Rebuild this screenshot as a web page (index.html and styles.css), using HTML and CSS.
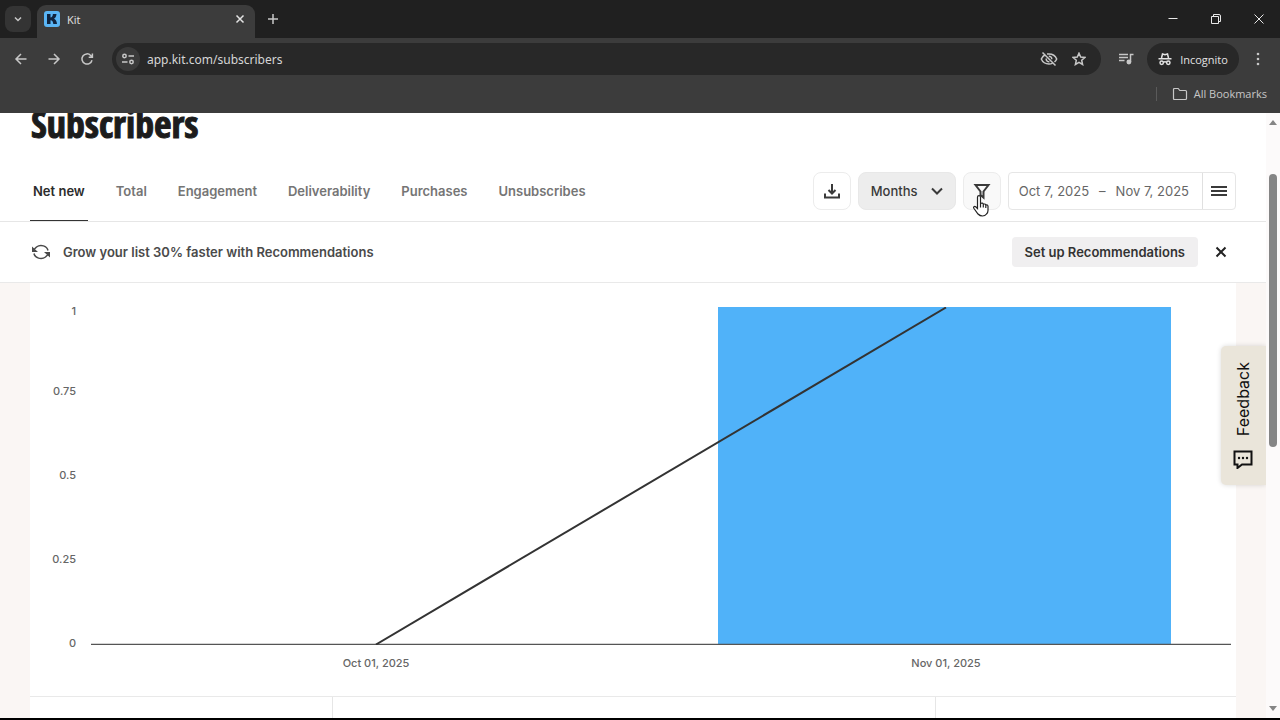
FILE: index.html
```
<!DOCTYPE html>
<html lang="en">
<head>
  <meta charset="UTF-8">
  <meta name="viewport" content="width=device-width, initial-scale=1.0">
  <title>Kit</title>
  <link rel="stylesheet" href="styles.css">
</head>
<body>
  <!-- Browser window -->
  <header class="browser">
    <div class="tab-strip">
      <button class="tab-search" aria-label="Search tabs">
        <svg width="10" height="10" viewBox="0 0 10 10"><path d="M2 3.5 5 6.5 8 3.5"/></svg>
      </button>
      <div class="browser-tab">
        <svg class="favicon" width="16" height="16" viewBox="0 0 16 16"><rect width="16" height="16" rx="3" fill="#5ab5f5"/><path d="M3 3h3.500v3.500C8 6.500 8.700 5 8.900 3h3.600c-.2 2.200-1 3.900-2.500 4.800 1.700.7 2.700 2.500 3 5.200H9.300C9.100 10.700 8.300 9.300 6.500 9.300V13H3z" fill="#10243f"/></svg>
        <span>Kit</span>
        <button class="tab-close" aria-label="Close tab">
          <svg width="10" height="10" viewBox="0 0 10 10"><path d="M1.500 1.500l7 7M8.500 1.500l-7 7"/></svg>
        </button>
      </div>
      <button class="new-tab" aria-label="New tab">
        <svg width="12" height="12" viewBox="0 0 12 12"><path d="M6 1v10M1 6h10"/></svg>
      </button>
      <div class="window-buttons">
        <button aria-label="Minimize"><svg width="12" height="12" viewBox="0 0 12 12"><path d="M1.500 5.500h9"/></svg></button>
        <button aria-label="Restore"><svg width="12" height="12" viewBox="0 0 12 12"><path d="M1.500 3.500h7v7h-7zM3.500 3.500v-2h5.500a1.500 1.500 0 0 1 1.500 1.500v5.500h-2"/></svg></button>
        <button aria-label="Close"><svg width="12" height="12" viewBox="0 0 12 12"><path d="M1.500 1.500l9 9M10.500 1.500l-9 9"/></svg></button>
      </div>
    </div>

    <div class="toolbar">
      <button aria-label="Back"><svg width="14" height="14" viewBox="0 0 14 14"><path d="M12.500 7H2M7 2 2 7l5 5"/></svg></button>
      <button aria-label="Forward"><svg width="14" height="14" viewBox="0 0 14 14"><path d="M1.500 7H12M7 2l5 5-5 5"/></svg></button>
      <button aria-label="Reload"><svg width="14" height="14" viewBox="0 0 14 14"><path d="M12 8.200A5.100 5.100 0 1 1 10.700 3.400L12.200 5M12.400 1.500V5.200H8.700"/></svg></button>
      <div class="address-bar">
        <button class="site-info" aria-label="Site information">
          <svg width="14" height="14" viewBox="0 0 14 14"><circle cx="3.500" cy="4" r="1.700"/><path d="M7.500 4H13M1 10h5.500"/><circle cx="10.500" cy="10" r="1.700"/></svg>
        </button>
        <input type="text" value="app.kit.com/subscribers" aria-label="Address">
        <button aria-label="Third-party cookies blocked">
          <svg width="18" height="16" viewBox="0 0 18 16"><path d="M5.500 3.500C3.700 4.400 2.200 6 1.300 8c1.300 3.100 4.300 5 7.700 5 1.200 0 2.300-.2 3.300-.7M7 3.100C7.600 3 8.300 3 9 3c3.400 0 6.400 1.900 7.700 5-.5 1.200-1.300 2.200-2.200 3M2.500 1.500l13 13M6.200 7.500a2.900 2.900 0 0 0 3.200 3.300M8.800 5.200A2.900 2.900 0 0 1 11.800 8.300"/></svg>
        </button>
        <button aria-label="Bookmark this tab">
          <svg width="14" height="14" viewBox="0 0 14 14"><path d="M7 1.200l1.700 3.900 4.200.4-3.200 2.800.9 4.200L7 10.300l-3.600 2.200.9-4.200L1.100 5.500l4.200-.4z"/></svg>
        </button>
      </div>
      <button class="media" aria-label="Control your media">
        <svg width="16" height="14" viewBox="0 0 16 14"><path d="M1 2.500h9M1 5.500h9M1 8.500h5.500M12.500 10V2.500H15.500"/><circle cx="10.900" cy="10" r="1.700" fill="#c7c7c7"/></svg>
      </button>
      <button class="incognito">
        <svg width="14" height="14" viewBox="0 0 14 14"><path d="M3.500 6l1-4 2.500.7L9.500 2l1 4M.5 6.700h13M5.500 10.200q1.500-1 3 0"/><circle cx="3.700" cy="10.700" r="1.700"/><circle cx="10.300" cy="10.700" r="1.700"/></svg>
        Incognito
      </button>
      <button class="more" aria-label="Customize and control">
        <svg width="4" height="14" viewBox="0 0 4 14"><g class="dots"><circle cx="2" cy="2" r="1.300"/><circle cx="2" cy="7" r="1.300"/><circle cx="2" cy="12" r="1.300"/></g></svg>
      </button>
    </div>

    <div class="bookmarks-bar">
      <button>
        <svg width="16" height="14" viewBox="0 0 16 14"><path d="M1.500 11.500V2.500q0-1 1-1h3.700l1.600 2h5.700q1 0 1 1v7q0 1-1 1h-11q-1 0-1-1z"/></svg>
        All Bookmarks
      </button>
    </div>
  </header>

  <div class="viewport">
    <main class="page">
      <h1>Subscribers</h1>

      <div class="page-nav">
        <nav class="tabs">
          <a class="active" href="#net-new">Net new</a>
          <a href="#total">Total</a>
          <a href="#engagement">Engagement</a>
          <a href="#deliverability">Deliverability</a>
          <a href="#purchases">Purchases</a>
          <a href="#unsubscribes">Unsubscribes</a>
        </nav>
        <div class="controls">
          <button class="icon-button" aria-label="Download">
            <svg width="18" height="18" viewBox="0 0 18 18"><path d="M9 2v9M5.500 8 9 11.500 12.500 8M2 11.500v4h14v-4"/></svg>
          </button>
          <div class="select">
            <select aria-label="Interval">
              <option>Months</option>
              <option>Weeks</option>
              <option>Days</option>
            </select>
            <svg width="14" height="14" viewBox="0 0 14 14"><path d="M2 4.500 7 9.500 12 4.500"/></svg>
          </div>
          <div class="filter">
            <button class="icon-button hovered" aria-label="Filter">
              <svg width="18" height="18" viewBox="0 0 18 18"><path d="M2.500 3h13L10.500 9.500v6L7.500 13V9.500z"/></svg>
            </button>
            <svg class="cursor" width="18" height="24" viewBox="0 0 18 24"><path d="M5.500 14.500V3.200a1.500 1.500 0 0 1 3 0V9.500q2.300-1 2.800.7 2-.7 2.500.8 2-.5 2.200 1.200v4.300q0 2-1.500 3.500-1.500 2-4 2T6 20L2 14.500q-1-1.500.3-2 1-.4 3.200 2zM8.500 9.500v4M11.300 10.500v3M13.800 11.200V14"/></svg>
          </div>
          <div class="date-range">
            <button class="dates"><span>Oct 7, 2025</span><span>–</span><span>Nov 7, 2025</span></button>
            <button class="presets" aria-label="Date presets">
              <svg width="18" height="14" viewBox="0 0 18 14"><path d="M1 3h16M1 7h16M1 11h16"/></svg>
            </button>
          </div>
        </div>
      </div>

      <div class="banner">
        <svg width="20" height="18" viewBox="0 0 20 18"><path d="M17 7.500A7 6 0 0 0 5.500 4L3 6.500M3 10.500A7 6 0 0 0 14.500 14l2.500-2.500"/><path class="heads" d="M1 3.500v5.500h6zM19 14.500V9h-6z"/></svg>
        <p>Grow your list 30% faster with Recommendations</p>
        <button class="setup">Set up Recommendations</button>
        <button class="dismiss" aria-label="Dismiss">
          <svg width="12" height="12" viewBox="0 0 12 12"><path d="M1.500 1.500l9 9M10.500 1.500l-9 9"/></svg>
        </button>
      </div>

      <section class="report">
        <div class="chart">
          <div class="y-axis">
            <span>1</span>
            <span>0.75</span>
            <span>0.5</span>
            <span>0.25</span>
            <span>0</span>
          </div>
          <svg class="plot" viewBox="0 0 1140 338" preserveAspectRatio="none" role="img" aria-label="Net new subscribers by month">
            <rect x="627" y="0" width="453" height="337" fill="#50b2f9"/>
            <path d="M0 337.500H1140"/>
            <path class="trend" d="M285 337.500 855 .5"/>
          </svg>
          <div class="x-axis">
            <span>Oct 01, 2025</span>
            <span>Nov 01, 2025</span>
          </div>
        </div>
        <div class="totals"><div></div><div></div><div></div></div>
      </section>

      <button class="feedback">
        <svg width="20" height="20" viewBox="0 0 20 20"><path d="M1.500 2.500h17v13H9L4.500 19v-3.500h-3z"/><g class="dots"><circle cx="6" cy="9" r="1.200"/><circle cx="10" cy="9" r="1.200"/><circle cx="14" cy="9" r="1.200"/></g></svg>
        <span>Feedback</span>
      </button>
    </main>

    <div class="scrollbar">
      <svg width="8" height="5" viewBox="0 0 8 5"><path d="M4 0l4 5H0z"/></svg>
      <div class="track"><div class="thumb"></div></div>
      <svg width="8" height="5" viewBox="0 0 8 5"><path d="M0 0h8L4 5z"/></svg>
    </div>
  </div>
</body>
</html>
```

FILE: styles.css
```
* {
  box-sizing: border-box;
}

body {
  margin: 0;
  height: 100vh;
  display: flex;
  flex-direction: column;
  overflow: hidden;
  border-bottom: 2px solid #000;
  font-family: Inter, 'Liberation Sans', sans-serif;
  color: #222;
  background: #fff;
}

button,
input,
select {
  margin: 0;
  padding: 0;
  border: none;
  background: none;
  color: inherit;
  font: inherit;
}

button {
  display: flex;
  align-items: center;
  justify-content: center;
  flex-shrink: 0;
}

svg {
  display: block;
  flex-shrink: 0;
  fill: none;
  stroke: currentColor;
  stroke-width: 1.5;
}

.dots {
  fill: currentColor;
  stroke: none;
}

/* Browser window */
.browser {
  flex-shrink: 0;
  height: 113px;
  background: #3c3c3c;
  color: #c7c7c7;
  font-family: 'Open Sans', 'Noto Sans', sans-serif;
  font-size: 11px;
}

.tab-strip {
  display: flex;
  align-items: center;
  height: 38px;
  padding-left: 5px;
  background: #202020;
}

.tab-search {
  width: 26px;
  height: 26px;
  border-radius: 8px;
  background: #343434;
}

.browser-tab {
  display: flex;
  align-items: center;
  gap: 7px;
  width: 218px;
  height: 33px;
  margin: 5px 0 0 6px;
  padding: 0 8px 5px 7px;
  border-radius: 9px 9px 0 0;
  background: #3c3c3c;
  color: #e3e3e3;
}

.favicon {
  stroke: none;
}

.tab-close {
  width: 14px;
  height: 14px;
  margin-left: auto;
}

.new-tab {
  width: 36px;
  height: 28px;
}

.window-buttons {
  display: flex;
  margin-left: auto;
  color: #e8e8e8;
}

.window-buttons button {
  width: 43px;
  height: 38px;
}

.window-buttons svg {
  stroke-width: 1;
}

.toolbar {
  display: flex;
  align-items: center;
  height: 42px;
  padding: 0 3px 0 4px;
}

.toolbar > button {
  width: 33px;
  height: 32px;
}

.address-bar {
  display: flex;
  flex: 1;
  align-items: center;
  height: 32px;
  margin-left: 9px;
  padding: 0 7px 0 4px;
  border-radius: 16px;
  background: #282828;
}

.address-bar button {
  width: 30px;
  height: 26px;
}

.address-bar .site-info {
  width: 24px;
  height: 24px;
  border-radius: 12px;
  background: #3a3a3a;
}

.address-bar input {
  flex: 1;
  min-width: 0;
  padding-left: 7px;
  color: #d6d6d6;
  font-family: 'Noto Sans', 'Open Sans', sans-serif;
  font-size: 12px;
}

.toolbar .media {
  width: 46px;
  padding-left: 3px;
}

.toolbar .incognito {
  gap: 8px;
  width: 92px;
  border-radius: 16px;
  background: #282828;
  color: #e3e3e3;
}

.toolbar .more {
  width: 38px;
}

.bookmarks-bar {
  display: flex;
  align-items: center;
  justify-content: flex-end;
  height: 27px;
  padding-right: 13px;
}

.bookmarks-bar button {
  gap: 6px;
  height: 14px;
  padding-left: 15px;
  border-left: 1px solid #5a5a5a;
}

.bookmarks-bar svg {
  stroke-width: 1.2;
}

/* Page */
.viewport {
  display: flex;
  flex: 1;
  min-height: 0;
}

.page {
  position: relative;
  display: flex;
  flex: 1;
  flex-direction: column;
  min-width: 0;
  overflow: hidden;
  background: #faf6f4;
}

/* scrolled up under the browser bar */
h1 {
  flex-shrink: 0;
  margin: 0;
  padding-left: 31px;
  height: 48px;
  background: #fff;
  color: #1c1c1c;
  font-family: 'Open Sans Condensed', 'Liberation Sans Narrow', sans-serif;
  font-size: 38px;
  font-weight: 800;
  line-height: 21px;
  -webkit-text-stroke: 1px #1c1c1c;
}

.page-nav {
  display: flex;
  flex-shrink: 0;
  justify-content: space-between;
  height: 61px;
  padding: 0 30px;
  border-bottom: 1px solid #e6e6e6;
  background: #fff;
}

.tabs {
  display: flex;
  gap: 25px;
}

.tabs a {
  padding: 20px 3px 0;
  color: #757575;
  font-size: 13px;
  font-weight: 600;
  line-height: 20px;
  text-decoration: none;
}

.tabs .active {
  border-bottom: 1px solid #333;
  color: #2b2b2b;
}

.controls {
  display: flex;
  gap: 7px;
  height: 38px;
  margin-top: 11px;
  color: #3a3a3a;
  font-size: 13px;
}

.icon-button {
  width: 38px;
  height: 38px;
  border: 1px solid #ececec;
  border-radius: 8px;
}

.icon-button svg {
  stroke-width: 2;
}

.icon-button.hovered {
  background: #f9f9f9;
}

.select {
  position: relative;
}

.select select {
  width: 98px;
  height: 38px;
  padding-left: 12px;
  border: 1px solid #e8e8e8;
  border-radius: 8px;
  background: #ededed;
  font-weight: 500;
  appearance: none;
}

.select svg {
  position: absolute;
  top: 12px;
  right: 12px;
  stroke-width: 2;
  pointer-events: none;
}

.filter {
  position: relative;
}

.cursor {
  position: absolute;
  top: 22px;
  left: 9px;
  fill: #fff;
  stroke: #222;
  stroke-width: 1.2;
}

.date-range {
  display: flex;
  border: 1px solid #e6e6e6;
  border-radius: 4px;
}

.dates {
  gap: 10px;
  padding: 0 13px 0 10px;
  color: #666;
}

.presets {
  width: 33px;
  border-left: 1px solid #e0e0e0;
}

.presets svg {
  stroke-width: 2;
}

.banner {
  display: flex;
  flex-shrink: 0;
  align-items: center;
  height: 61px;
  padding: 0 38px 0 31px;
  border-bottom: 1px solid #e9e9e9;
  background: #fff;
  color: #4a4a4a;
}

.banner .heads {
  fill: currentColor;
  stroke: none;
}

.banner p {
  flex: 1;
  margin: 0 0 0 12px;
  font-size: 13px;
  font-weight: 600;
}

.setup {
  height: 30px;
  margin-right: 16px;
  padding: 0 13px;
  border-radius: 4px;
  background: #f0eff0;
  color: #333;
  font-size: 13px;
  font-weight: 600;
}

.dismiss {
  width: 14px;
  height: 14px;
  color: #222;
}

.dismiss svg {
  stroke-width: 2;
}

.report {
  flex: 1;
  margin: 0 30px;
  background: #fff;
}

.chart {
  display: grid;
  grid-template-columns: 46px 1fr;
  grid-template-rows: 344px auto;
  column-gap: 15px;
  height: 413px;
  padding: 22px 5px 0 0;
  color: #666;
  font-size: 11px;
  font-weight: 500;
  line-height: 12px;
}

.y-axis {
  display: grid;
  grid-template-rows: 12px 80px 84px 84px 84px;
  align-items: end;
  text-align: right;
}

.plot {
  width: 100%;
  height: 338px;
  margin-top: 2px;
  stroke: none;
}

.plot path {
  stroke: #555;
  stroke-width: 1.5;
  vector-effect: non-scaling-stroke;
}

.plot .trend {
  stroke: #333;
  stroke-width: 2;
}

.x-axis {
  display: grid;
  grid-column: 2;
  grid-template-columns: 1fr 1fr;
  padding-top: 8px;
  text-align: center;
}

.totals {
  display: grid;
  grid-template-columns: 1fr 2fr 1fr;
  height: 60px;
  border-top: 1px solid #e9e9e9;
}

.totals div + div {
  border-left: 1px solid #e6e6e6;
}

.feedback {
  position: absolute;
  top: 233px;
  right: 0;
  flex-direction: column-reverse;
  gap: 12px;
  width: 45px;
  height: 139px;
  padding-right: 2px;
  border-radius: 5px 0 0 5px;
  background: #eae5da;
  box-shadow: 0 0 5px rgba(0, 0, 0, 0.15);
  color: #111;
  font-size: 16px;
}

.feedback span {
  writing-mode: vertical-rl;
  transform: rotate(180deg);
}

.feedback svg {
  stroke-width: 2;
}

.scrollbar {
  display: flex;
  flex-direction: column;
  align-items: center;
  width: 14px;
  padding: 7px 0;
  background: #fcfafa;
}

.scrollbar svg {
  fill: #858585;
  stroke: none;
}

.track {
  flex: 1;
  padding-top: 49px;
}

.thumb {
  width: 8px;
  height: 51%;
  min-height: 273px;
  border-radius: 4px;
  background: #858585;
}
```
